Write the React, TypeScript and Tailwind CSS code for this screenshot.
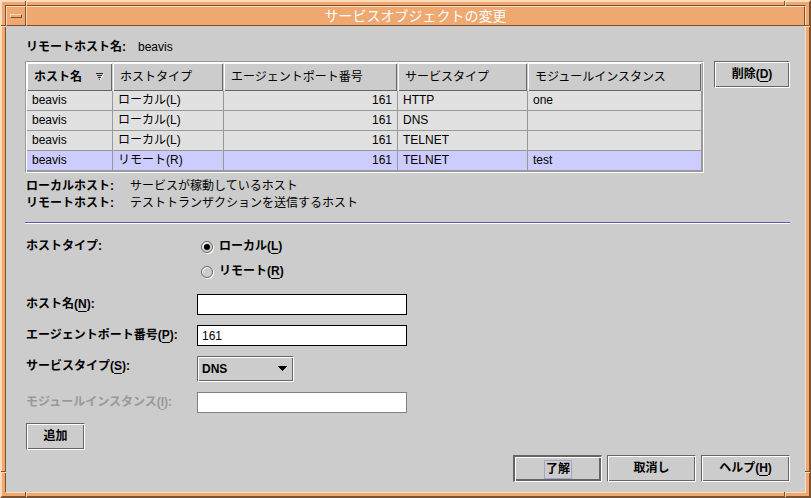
import { useState } from "react";
import type { ReactNode } from "react";

const services = [
  { host: "beavis", type: "ローカル(L)", port: 161, service: "HTTP", module: "one" },
  { host: "beavis", type: "ローカル(L)", port: 161, service: "DNS", module: "" },
  { host: "beavis", type: "ローカル(L)", port: 161, service: "TELNET", module: "" },
  { host: "beavis", type: "リモート(R)", port: 161, service: "TELNET", module: "test" },
];

const raised =
  "border border-t-[#666] border-l-[#666] border-r-white border-b-white shadow-[inset_1px_1px_0_#fff,inset_-1px_-1px_0_#666]";

// Label text followed by its mnemonic, e.g. 削除(D)
function Mnemonic({ text, letter }: { text: string; letter: string }) {
  return (
    <>
      {text}(<span className="underline underline-offset-3">{letter}</span>)
    </>
  );
}

function Button({ children, className }: { children: ReactNode; className: string }) {
  return (
    <button type="button" className={`h-[27px] font-bold ${raised} ${className}`}>
      {children}
    </button>
  );
}

function HeaderCell({ children }: { children: ReactNode }) {
  return (
    <th
      scope="col"
      className="h-7 border-r border-[#ccc] pr-2 pl-[7px] text-left font-normal whitespace-nowrap shadow-[inset_1px_1px_0_#fff,inset_-1px_-1px_0_#666]"
    >
      {children}
    </th>
  );
}

// Small cuts in the window frame that mark the resize corners
function FrameNotches() {
  const vertical = "absolute h-[5px] w-[2px] border-l border-l-[#7b5230] bg-[#fcdcbc]";
  const horizontal = "absolute h-[2px] w-[5px] border-t border-t-[#7b5230] bg-[#fcdcbc]";
  return (
    <div aria-hidden="true">
      <span className={`${vertical} -top-px left-[23px]`} />
      <span className={`${vertical} -top-px right-[23px]`} />
      <span className={`${vertical} -bottom-px left-[23px]`} />
      <span className={`${vertical} right-[23px] -bottom-px`} />
      <span className={`${horizontal} top-[23px] -left-px`} />
      <span className={`${horizontal} top-[23px] -right-px`} />
      <span className={`${horizontal} bottom-[23px] -left-px`} />
      <span className={`${horizontal} -right-px bottom-[23px]`} />
    </div>
  );
}

function HostTypeOption({
  checked,
  onChange,
  children,
}: {
  checked: boolean;
  onChange: () => void;
  children: ReactNode;
}) {
  return (
    <label className="flex h-[25px] items-center gap-[6px]">
      <span className="relative flex h-3 w-3">
        <input
          type="radio"
          name="hostType"
          checked={checked}
          onChange={onChange}
          className="h-3 w-3 appearance-none rounded-full border border-[#666] shadow-[1px_1px_0_#fff,inset_1px_1px_0_#fff]"
        />
        {checked && (
          <span className="pointer-events-none absolute inset-[3px] rounded-full bg-black" />
        )}
      </span>
      <span>{children}</span>
    </label>
  );
}

export default function App() {
  const [hostType, setHostType] = useState("local");
  const [hostName, setHostName] = useState("");
  const [port, setPort] = useState("161");
  const [serviceType, setServiceType] = useState("DNS");
  const [selected, setSelected] = useState(3);

  return (
    <div className="relative flex min-h-screen flex-col border-2 border-t-[#fcdcbc] border-r-[#7b5230] border-b-[#7b5230] border-l-[#fcdcbc] bg-[#eea870] p-[3px] font-['Liberation_Sans','Noto_Sans_CJK_JP',sans-serif] text-xs leading-[17px] text-black">
      <div className="flex flex-1 flex-col border border-t-[#7b5230] border-r-[#fcdcbc] border-b-[#fcdcbc] border-l-[#7b5230] bg-[#ccc]">
        <header className="flex h-5 bg-[#eea870]">
          <button
            type="button"
            aria-label="メニュー"
            className="flex w-5 items-center justify-center border border-t-[#fcdcbc] border-r-[#7b5230] border-b-[#7b5230] border-l-[#fcdcbc]"
          >
            <span className="h-1 w-3 border border-t-[#fcdcbc] border-r-[#7b5230] border-b-[#7b5230] border-l-[#fcdcbc]" />
          </button>
          <h1 className="flex-1 border border-t-[#fcdcbc] border-r-[#7b5230] border-b-[#7b5230] border-l-[#fcdcbc] text-center text-sm leading-[18px] text-white">
            サービスオブジェクトの変更
          </h1>
        </header>

        <main className="flex flex-1 flex-col pt-[13px] pr-[15px] pb-[10px] pl-[19px]">
          <p className="flex gap-3 pl-px">
            <span className="font-bold">リモートホスト名:</span>
            <span>beavis</span>
          </p>

          <div className="mt-[5px] flex items-start gap-[10px]">
            <div className="flex-1 border border-t-[#999] border-r-white border-b-white border-l-[#999] p-px shadow-[inset_1px_1px_0_#fff,inset_-1px_-1px_0_#999]">
              <table className="w-full table-fixed border-separate border-spacing-0">
                <colgroup>
                  <col className="w-[86px]" />
                  <col className="w-[111px]" />
                  <col className="w-[174px]" />
                  <col className="w-[130px]" />
                  <col />
                </colgroup>
                <thead>
                  <tr>
                    <HeaderCell>
                      <span className="flex items-center justify-between font-bold">
                        ホスト名
                        <svg width="8" height="8" viewBox="0 0 8 8" shapeRendering="crispEdges">
                          <path d="M4 7L7.500 1" stroke="#fff" fill="none" />
                          <path
                            d="M0 .5H7M1 2.500H6M2 4.500H5M3 6.500H4"
                            stroke="#222"
                            fill="none"
                          />
                        </svg>
                      </span>
                    </HeaderCell>
                    <HeaderCell>ホストタイプ</HeaderCell>
                    <HeaderCell>エージェントポート番号</HeaderCell>
                    <HeaderCell>サービスタイプ</HeaderCell>
                    <HeaderCell>モジュールインスタンス</HeaderCell>
                  </tr>
                </thead>
                <tbody>
                  {services.map((row, index) => (
                    <tr
                      key={index}
                      onClick={() => setSelected(index)}
                      className={`*:h-5 *:border-r *:border-b *:border-[#999] *:px-[5px] ${
                        index === selected ? "bg-[#ccccff]" : "bg-[#e1e1e1]"
                      }`}
                    >
                      <td>{row.host}</td>
                      <td>{row.type}</td>
                      <td className="text-right">{row.port}</td>
                      <td>{row.service}</td>
                      <td>{row.module}</td>
                    </tr>
                  ))}
                </tbody>
              </table>
            </div>
            <Button className="w-[76px]">
              <Mnemonic text="削除" letter="D" />
            </Button>
          </div>

          <dl className="mt-[5px] grid grid-cols-[104px_1fr] pl-px">
            <dt className="font-bold">ローカルホスト:</dt>
            <dd>サービスが稼動しているホスト</dd>
            <dt className="font-bold">リモートホスト:</dt>
            <dd>テストトランザクションを送信するホスト</dd>
          </dl>

          <hr className="mt-[10px] h-[2px] border-t border-b border-t-[#6358a0] border-b-white" />

          <form className="pl-px" onSubmit={(e) => e.preventDefault()}>
            <div className="mt-[10px] grid grid-cols-[171px_210px] font-bold">
              <span className="leading-[25px]">ホストタイプ:</span>
              <div role="radiogroup" aria-label="ホストタイプ" className="pl-1">
                <HostTypeOption
                  checked={hostType === "local"}
                  onChange={() => setHostType("local")}
                >
                  <Mnemonic text="ローカル" letter="L" />
                </HostTypeOption>
                <HostTypeOption
                  checked={hostType === "remote"}
                  onChange={() => setHostType("remote")}
                >
                  <Mnemonic text="リモート" letter="R" />
                </HostTypeOption>
              </div>
            </div>

            <div className="mt-[10px] grid grid-cols-[171px_210px] gap-y-[10px]">
              <label htmlFor="hostName" className="leading-[21px] font-bold">
                <Mnemonic text="ホスト名" letter="N" />:
              </label>
              <input
                id="hostName"
                type="text"
                value={hostName}
                onChange={(e) => setHostName(e.target.value)}
                className="h-[21px] border border-black bg-white px-1"
              />

              <label htmlFor="port" className="leading-[21px] font-bold">
                <Mnemonic text="エージェントポート番号" letter="P" />:
              </label>
              <input
                id="port"
                type="text"
                value={port}
                onChange={(e) => setPort(e.target.value)}
                className="h-[21px] border border-black bg-white px-1"
              />

              <label htmlFor="serviceType" className="leading-[21px] font-bold">
                <Mnemonic text="サービスタイプ" letter="S" />:
              </label>
              <div className="relative w-[97px]">
                <select
                  id="serviceType"
                  value={serviceType}
                  onChange={(e) => setServiceType(e.target.value)}
                  className={`block h-[26px] w-full appearance-none pl-1 font-bold ${raised}`}
                >
                  <option>DNS</option>
                  <option>HTTP</option>
                  <option>TELNET</option>
                </select>
                <svg
                  className="pointer-events-none absolute top-[10px] right-[7px]"
                  width="10"
                  height="5"
                  viewBox="0 0 10 5"
                  shapeRendering="crispEdges"
                >
                  <path d="M0 0H10L5 5Z" />
                </svg>
              </div>

              <label htmlFor="moduleInstance" className="leading-[21px] font-bold text-[#999]">
                <Mnemonic text="モジュールインスタンス" letter="I" />:
              </label>
              <input
                id="moduleInstance"
                type="text"
                disabled
                className="h-[21px] border border-[#808080] bg-white px-1"
              />
            </div>

            <Button className="mt-[10px] w-[59px]">追加</Button>
          </form>

          <footer className="mt-auto flex justify-end gap-[5px] pt-[5px]">
            <button
              type="submit"
              className="flex h-[27px] w-[89px] items-center justify-center border-t-2 border-r border-b border-l-2 border-t-[#666] border-r-white border-b-white border-l-[#666] font-bold shadow-[inset_1px_1px_0_#fff,inset_-2px_-2px_0_#666]"
            >
              <span className="border border-[#a3a3cc] px-px">了解</span>
            </button>
            <Button className="w-[89px]">取消し</Button>
            <Button className="w-[89px]">
              <Mnemonic text="ヘルプ" letter="H" />
            </Button>
          </footer>
        </main>
      </div>
      <FrameNotches />
    </div>
  );
}
